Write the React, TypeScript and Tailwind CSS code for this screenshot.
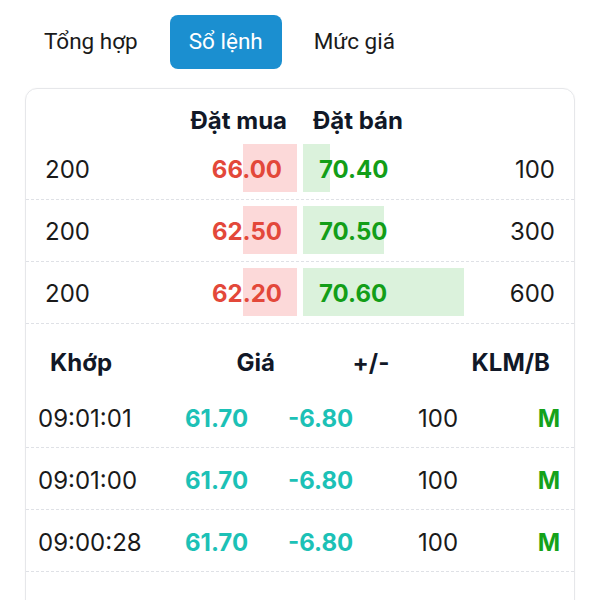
import React from "react";

const book = [
  { bv: 200, bp: "66.00", bw: 54, sp: "70.40", sw: 27, sv: 100 },
  { bv: 200, bp: "62.50", bw: 54, sp: "70.50", sw: 81, sv: 300 },
  { bv: 200, bp: "62.20", bw: 54, sp: "70.60", sw: 161, sv: 600 },
];

const trades = [
  { t: "09:01:01", p: "61.70", c: "-6.80", v: 100, s: "M" },
  { t: "09:01:00", p: "61.70", c: "-6.80", v: 100, s: "M" },
  { t: "09:00:28", p: "61.70", c: "-6.80", v: 100, s: "M" },
];

export default function App() {
  return (
    <div className="w-[600px] h-[600px] overflow-hidden bg-white px-[25px] pt-[15px]">
      <div className="flex gap-[13px] font-['Roboto',sans-serif] text-[22.5px]">
        <div className="h-[54px] px-[19px] flex items-center rounded-[8px] text-[#1a1a1a]">Tổng hợp</div>
        <div className="h-[54px] px-[19px] flex items-center rounded-[8px] bg-[#1b8fd0] text-white">Sổ lệnh</div>
        <div className="h-[54px] px-[19px] flex items-center rounded-[8px] text-[#1a1a1a]">Mức giá</div>
      </div>
      <div className="mt-[19px] border border-[#e6e7ea] rounded-[12px] h-[600px] font-['Inter',sans-serif] text-[24px] shadow-[0_0_2px_rgba(0,0,0,0.04)]">
        {/* Order book header */}
        <div className="h-[49px] grid grid-cols-2 gap-[6px] px-[19px] pb-[3px] items-end font-bold text-[#111827]">
          <div className="text-right pr-[10px] leading-[28px]">Đặt mua</div>
          <div className="pl-[10px] leading-[28px]">Đặt bán</div>
        </div>
        {book.map((r, i) => (
          <div key={i} className="pt-[6px] pb-[7px] border-b border-dashed border-[#dfe1e6]">
            <div className="grid grid-cols-2 gap-[6px] px-[19px] h-[48px]">
              <div className="flex items-center relative pt-[4px]">
                <div className="absolute right-0 top-0 h-full bg-[#fcd9d9]" style={{ width: r.bw }} />
                <span className="relative text-[#1a1a1a]">{r.bv}</span>
                <span className="relative ml-auto pr-[15px] font-bold text-[#e3483a]">{r.bp}</span>
              </div>
              <div className="flex items-center relative pt-[4px]">
                <div className="absolute left-0 top-0 h-full bg-[#dbf2dc]" style={{ width: r.sw }} />
                <span className="relative pl-[16px] font-bold text-[#139e18]">{r.sp}</span>
                <span className="relative ml-auto text-[#1a1a1a]">{r.sv}</span>
              </div>
            </div>
          </div>
        ))}
        {/* Trades header */}
        <div className="h-[62px] pt-[15px] flex items-center px-[24px] font-bold text-[#111827]">
          <div className="w-[130px]">Khớp</div>
          <div className="w-[95px] text-right">Giá</div>
          <div className="w-[192px] text-center">+/-</div>
          <div className="ml-auto">KLM/B</div>
        </div>
        {trades.map((r, i) => (
          <div key={i} className="h-[62px] pt-[4px] border-b border-dashed border-[#dfe1e6] flex items-center pl-[12px] pr-[13px]">
            <div className="w-[147px] text-[#1a1a1a]">{r.t}</div>
            <div className="w-[103px] font-bold text-[#1cc1b6]">{r.p}</div>
            <div className="w-[130px] font-bold text-[#1cc1b6]">{r.c}</div>
            <div className="text-[#1a1a1a]">{r.v}</div>
            <div className="ml-auto pr-[1px] font-bold text-[#15a21a]">{r.s}</div>
          </div>
        ))}
      </div>
    </div>
  );
}
